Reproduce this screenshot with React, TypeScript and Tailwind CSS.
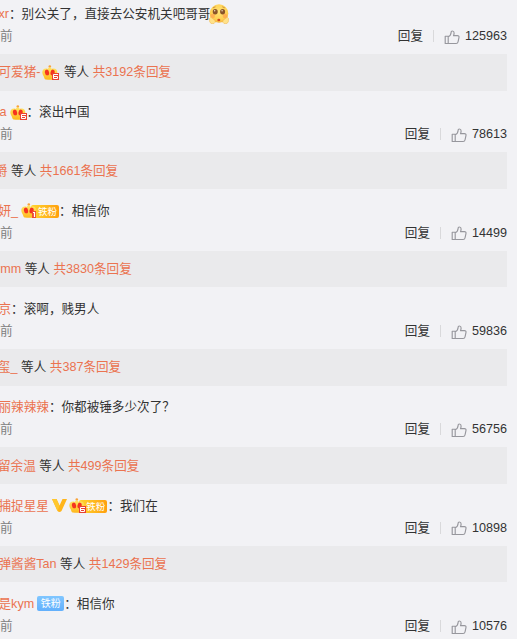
import type { ReactNode } from 'react';

type Comment = {
  id: number;
  shift: string;
  name: string;
  badges?: ReactNode;
  text: string;
  emoji?: boolean;
  likes: number;
  replyShift?: string;
  replyName?: string;
  replyBadge?: ReactNode;
  replies?: number;
};

function Crown({ level }: { level: number }) {
  return (
    <svg viewBox="0 0 18 15" className="w-[18px] h-[15px] shrink-0">
      <defs>
        <linearGradient id="crown" x1="0" y1="0" x2="0" y2="1">
          <stop offset="0" stopColor="#ffe566" />
          <stop offset="1" stopColor="#ffb81c" />
        </linearGradient>
      </defs>
      <circle cx="7.8" cy="1.5" r="1.3" fill="#f9a33a" />
      <path
        d="M.3 7.2C.3 5 1.800 3.500 4 3.500c.8 0 1.400.1 1.900.4.400-.9 1-1.400 1.900-1.400s1.500.5 1.900 1.400c.5-.3 1.100-.4 1.900-.4 2.200 0 3.700 1.500 3.700 3.700 0 1.800-1 3.200-1.600 4.500l-.6 1.800c-.2.6-.7.8-1.300.9-2.700.3-5.300.3-8 0-.6-.1-1.100-.3-1.300-.9l-.6-1.800C1.300 10.400.3 9 .3 7.200z"
        fill="url(#crown)"
      />
      <ellipse cx="5" cy="7.500" rx="2.100" ry="2.900" fill="#f5331f" transform="rotate(-10 5 7.500)" />
      <ellipse cx="10.600" cy="7.500" rx="2.100" ry="2.900" fill="#f5331f" transform="rotate(10 10.600 7.500)" />
      {level === 1 ? (
        <>
          <path d="M11 8h4v7h-4z" fill="#ee4b35" />
          <path d="M12 9.500h1.500V14" fill="none" stroke="#fff" strokeWidth="1.200" />
        </>
      ) : (
        <>
          <path d="M10 8h7v7h-7z" fill="#ea4030" />
          <path d="M16 9.500h-4.500v4h4v-2h-4" fill="none" stroke="#fff" strokeWidth="1" />
        </>
      )}
    </svg>
  );
}

function GoldFan({ level }: { level: number }) {
  return (
    <span className="flex h-[15px] w-[38px] items-center">
      <span className="relative z-10 flex shrink-0">
        <Crown level={level} />
      </span>
      <span className="-ml-2 mt-[2px] flex h-[13px] w-[28px] shrink-0 items-center justify-end rounded-[2px] bg-gradient-to-r from-[#ffd52e] to-[#ff9f0c] pr-[2px] text-[9.500px] leading-none text-white">
        铁粉
      </span>
    </span>
  );
}

function BlueFan() {
  return (
    <span className="flex h-[15px] w-[27px] items-center justify-center rounded-[2px] bg-gradient-to-b from-[#80c6ff] to-[#62b0fc] text-[10px] leading-none text-white">
      铁粉
    </span>
  );
}

function Vip() {
  return (
    <svg viewBox="0 0 15 13" className="w-[15px] h-[13px] shrink-0">
      <path d="M0 0h4.500l3 6.500L10.500 0H15L9.500 12q-2 2-4 0z" fill="#ffb51b" />
      <path d="M0 0h4.500l3 6.500-2 5.500z" fill="#ffc72e" />
    </svg>
  );
}

function Pleading() {
  return (
    <svg viewBox="0 0 20 20" className="-ml-px h-5 w-5 shrink-0">
      <defs>
        <radialGradient id="face" cx=".5" cy=".4" r=".6">
          <stop offset="0" stopColor="#ffe477" />
          <stop offset=".75" stopColor="#ffd052" />
          <stop offset="1" stopColor="#f3b13b" />
        </radialGradient>
      </defs>
      <circle cx="10" cy="9.500" r="9.300" fill="url(#face)" />
      <circle cx="3.700" cy="12" r="2.300" fill="#ff9a4e" opacity=".6" />
      <circle cx="16" cy="12" r="2.300" fill="#ff9a4e" opacity=".6" />
      <ellipse cx="6.200" cy="7.700" rx="2.500" ry="2.700" fill="#8a5429" />
      <ellipse cx="13.600" cy="7.700" rx="2.500" ry="2.700" fill="#8a5429" />
      <circle cx="5.700" cy="6.700" r=".7" fill="#f8e3c8" />
      <circle cx="13.100" cy="6.700" r=".7" fill="#f8e3c8" />
      <path d="M4 3.800l2.500-1M15.800 3.800l-2.500-1" stroke="#c28436" strokeWidth=".8" />
      <ellipse cx="9.800" cy="16" rx="1.500" ry="1.200" fill="#d24a1c" />
      <path d="M.5 14.500q1-2 2.500-.5l3 2.500q1 2-1 3H2Q0 18 .5 14.500zM19.500 14.500q-1-2-2.500-.5l-3 2.500q-1 2 1 3h3q2-1.500 1.500-5z" fill="#ffe28a" stroke="#f0b64b" strokeWidth=".5" />
    </svg>
  );
}

function ThumbUp() {
  return (
    <svg viewBox="0 0 16 16" className="h-[15px] w-4 shrink-0" preserveAspectRatio="none" fill="none" stroke="#97979d" strokeWidth="1.150" strokeLinejoin="round">
      <path d="M1.200 6.700h3v7.700h-3zM4.200 7.200C6 6.400 7 4.800 7.100 2.700c0-1.100.5-1.700 1.300-1.700 1.100 0 1.700.9 1.700 2.100 0 1-.2 1.900-.6 2.900h3.900c1.200 0 1.800.9 1.600 1.900l-1 4.900c-.2 1-.9 1.600-1.900 1.600H4.200" />
    </svg>
  );
}

const comments: Comment[] = [
  { id: 1, shift: '-ml-[1.600px]', name: 'xr', text: '别公关了，直接去公安机关吧哥哥', emoji: true, likes: 125963, replyShift: '-ml-[1.500px]', replyName: '可爱猪-', replyBadge: <span className="ml-[2px] flex"><Crown level={6} /></span>, replies: 3192 },
  { id: 2, shift: '-ml-[0.500px]', name: 'a', badges: <span className="ml-[3px] -mr-px flex"><Crown level={6} /></span>, text: '滚出中国', likes: 78613, replyShift: '-ml-[5px]', replyName: '爵', replies: 1661 },
  { id: 3, shift: '-ml-[1.500px]', name: '妍_', badges: <span className="ml-[3px]"><GoldFan level={1} /></span>, text: '相信你', likes: 14499, replyShift: '-ml-[4px]', replyName: 'rmm', replies: 3830 },
  { id: 4, shift: '-ml-[1.500px]', name: '京', text: '滚啊，贱男人', likes: 59836, replyShift: '-ml-[2px]', replyName: '玺_', replies: 387 },
  { id: 5, shift: '-ml-[1.500px]', name: '丽辣辣辣', text: '你都被锤多少次了？', likes: 56756, replyShift: '-ml-[2px]', replyName: '留余温', replies: 499 },
  { id: 6, shift: '-ml-[1.500px]', name: '捕捉星星', badges: <span className="ml-[3px] flex items-center gap-[2.500px]"><Vip /><GoldFan level={6} /></span>, text: '我们在', likes: 10898, replyShift: '-ml-[1.500px]', replyName: '弹酱酱Tan', replies: 1429 },
  { id: 7, shift: '-ml-[1.500px]', name: '是kym', badges: <span className="ml-[3px]"><BlueFan /></span>, text: '相信你', likes: 10576 },
];

function CommentItem({ comment }: { comment: Comment }) {
  return (
    <div className="h-[98.330px] pt-[11.500px]">
      <div className="flex h-5 items-center">
        <span className={`text-[#eb7350] ${comment.shift}`}>{comment.name}</span>
        {comment.badges}
        <span>：{comment.text}</span>
        {comment.emoji && <Pleading />}
      </div>
      <div className="mt-[2.200px] flex h-5 items-center justify-between pr-[10px]">
        <span className="text-[#808080]">前</span>
        <div className="flex items-center">
          <span>回复</span>
          <span className="ml-[10px] h-3 w-px bg-[#d9d9db]" />
          <span className="ml-[10px] mr-[5px] flex pt-[2px]">
            <ThumbUp />
          </span>
          <span>{comment.likes}</span>
        </div>
      </div>
      {comment.replies && (
        <div className="mr-[10px] mt-[8px] flex h-[36.600px] items-center bg-[#eaeaec]">
          <span className={`text-[#eb7350] ${comment.replyShift}`}>{comment.replyName}</span>
          {comment.replyBadge}
          <span className="ml-[3.500px]">等人</span>
          <span className="ml-[3.500px] text-[#eb7350]">共{comment.replies}条回复</span>
        </div>
      )}
    </div>
  );
}

export default function App() {
  return (
    <div className="h-[639px] w-[517px] overflow-hidden whitespace-nowrap bg-[#f2f2f5] font-['Liberation_Sans','Noto_Sans_CJK_SC',sans-serif] text-[12.600px] leading-5 text-[#333]">
      <div className="-mt-[7.600px]">
        {comments.map((comment) => (
          <CommentItem key={comment.id} comment={comment} />
        ))}
      </div>
    </div>
  );
}
